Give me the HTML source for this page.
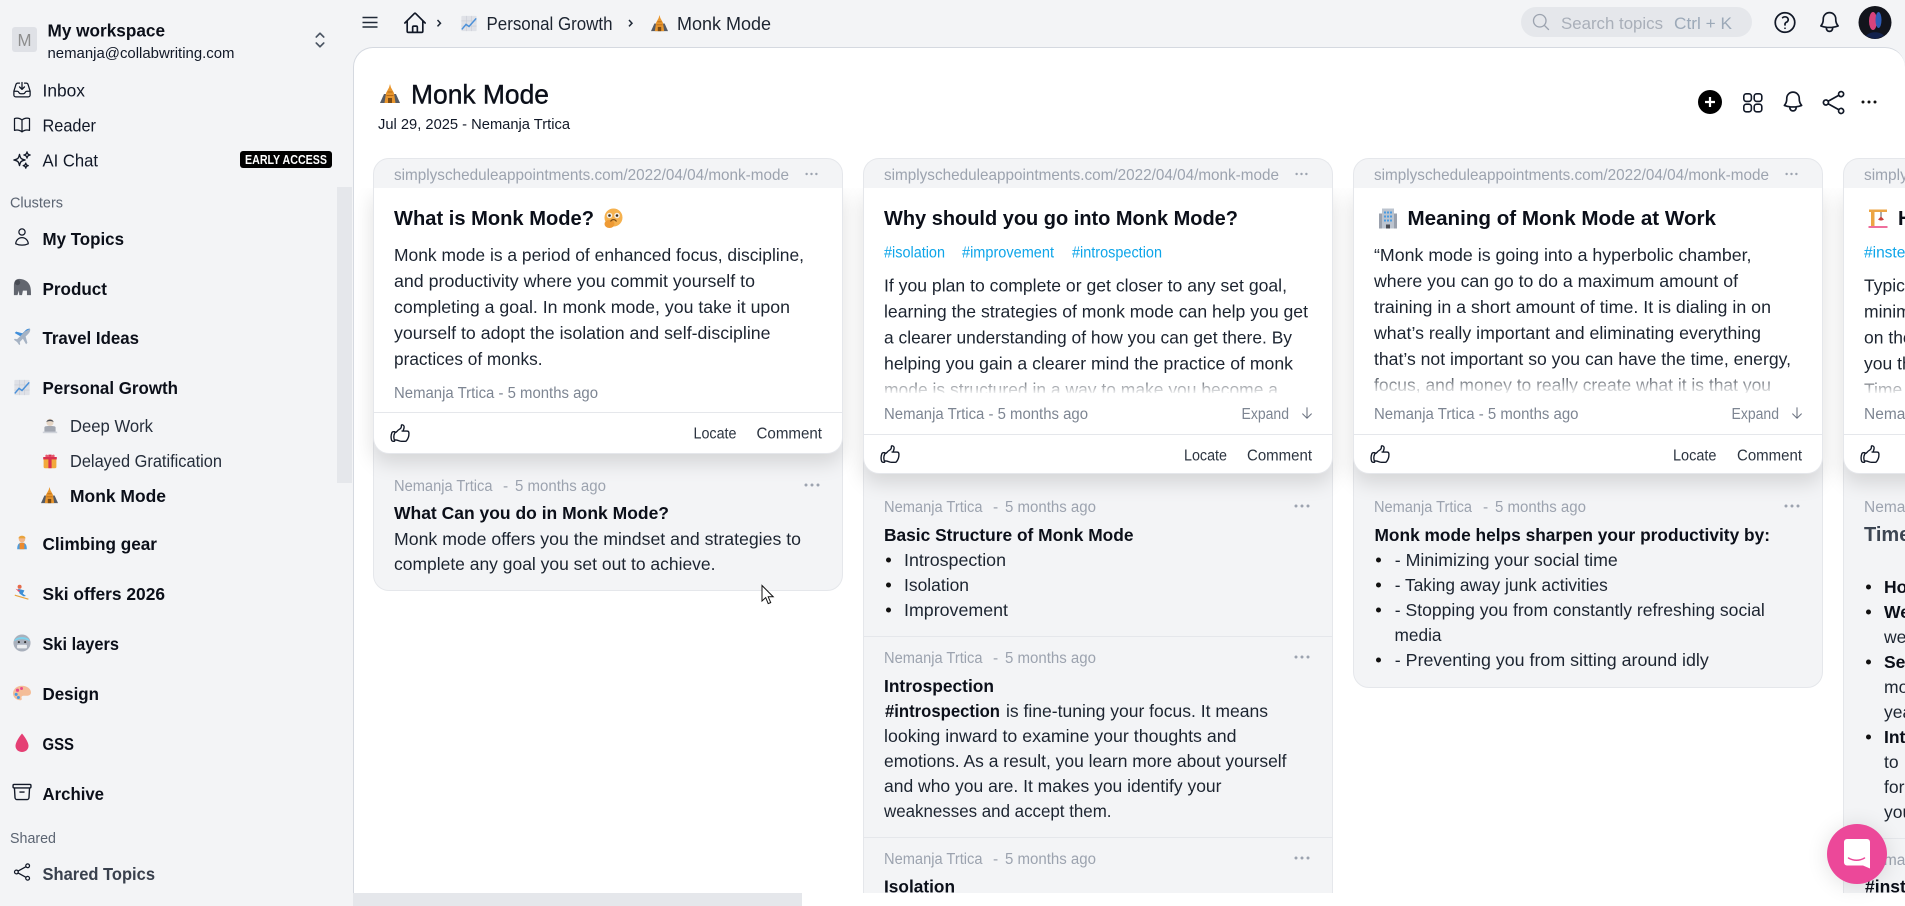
<!DOCTYPE html>
<html lang="en"><head><meta charset="utf-8"><title>Monk Mode</title>
<style>
html,body{margin:0;padding:0;width:1905px;height:906px;overflow:hidden;background:#f3f4f6;font-family:"Liberation Sans",sans-serif}
.abs{position:absolute;box-sizing:border-box}
.main{left:353px;top:47px;width:1552px;height:859px;background:#fff;border:1px solid #d5d9e0;border-right:0;border-radius:20px 20px 0 0}
.sb{left:337px;top:187px;width:15px;height:296px;background:#e5e7eb}
.col{width:470px;top:158px;background:#f3f4f6;border:1px solid #e5e7eb;border-radius:16px}
.tall{height:735px;border-bottom:0;border-radius:16px 16px 0 0}
.card{left:-1px;width:470px;top:29px;background:#fff;border:1px solid #e5e7eb;border-top:0;border-radius:0 0 16px 16px;box-shadow:0 9px 20px rgba(0,0,0,.13);clip-path:inset(0 -30px -40px -30px)}
.hr{left:0;width:468px;height:1px;background:#e5e7eb}
.strip{left:353px;top:893px;width:1552px;height:13px;background:#fff}
.thumb{left:353px;top:893px;width:449px;height:13px;background:#e5e7eb}
.chat{left:1827px;top:824px;width:60px;height:60px;border-radius:50%;background:#ec4899;box-shadow:0 2px 22px rgba(0,0,0,.12)}
svg.layer{position:absolute;left:0;top:0}
text{font-family:"Liberation Sans",sans-serif;fill:#1c2430;white-space:pre}
.s{font-size:17.5px;fill:#111827}
.sb17{font-size:17.5px;font-weight:700;fill:#0b0f19}
.g14{font-size:14.5px;fill:#5b6472}
.u{font-size:16px;fill:#9ca3af}
.h{font-size:20px;font-weight:700;fill:#0b0f19}
.p{font-size:17.5px;fill:#1c2430}
.pb{font-size:17.5px;font-weight:700;fill:#0b0f19}
.m{font-size:15.5px;fill:#7d8592}
.m2{font-size:15.5px;fill:#9ca3af}
.a{font-size:15.5px;fill:#2c3440}
.t{font-size:15.5px;fill:#0ea5e9}
</style></head><body>
<div class="abs sb"></div>
<div class="abs main"></div>

<div class="abs col" style="left:373px;height:433px"><div class="abs card" style="height:265.5px"><div class="abs hr" style="top:224px"></div></div></div>
<div class="abs col tall" style="left:863px"><div class="abs card" style="height:286px"><div class="abs hr" style="top:245.5px"></div></div>
<div class="abs hr" style="top:477px"></div><div class="abs hr" style="top:678px"></div></div>
<div class="abs col" style="left:1353px;height:530px"><div class="abs card" style="height:286px"><div class="abs hr" style="top:245.5px"></div></div></div>
<div class="abs col tall" style="left:1843px"><div class="abs card" style="height:286px"><div class="abs hr" style="top:245.5px"></div></div>
<div class="abs hr" style="top:679px"></div></div>

<div class="abs strip"></div><div class="abs thumb"></div>

<svg class="layer" width="1905" height="906" viewBox="0 0 1905 906" xmlns="http://www.w3.org/2000/svg">
<defs>
<clipPath id="c"><rect x="353" y="47" width="1552" height="846"/></clipPath>
<linearGradient id="f" x1="0" y1="0" x2="0" y2="1"><stop offset="0" stop-color="#fff" stop-opacity="0"/><stop offset="1" stop-color="#fff" stop-opacity=".92"/></linearGradient>
<symbol id="inbox" viewBox="0 0 24 24"><path fill="none" stroke="#111827" stroke-width="1.5" stroke-linecap="round" stroke-linejoin="round" d="M9 3.75H6.912a2.25 2.25 0 0 0-2.15 1.588L2.35 13.177a2.25 2.25 0 0 0-.1.661V18a2.25 2.25 0 0 0 2.25 2.25h15A2.25 2.25 0 0 0 21.75 18v-4.162c0-.224-.034-.447-.1-.661L19.24 5.338a2.25 2.25 0 0 0-2.15-1.588H15M2.25 13.5h3.86a2.25 2.25 0 0 1 2.012 1.244l.256.512a2.25 2.25 0 0 0 2.013 1.244h3.218a2.25 2.25 0 0 0 2.013-1.244l.256-.512a2.25 2.25 0 0 1 2.013-1.244h3.859M12 3v8.25m0 0-3-3m3 3 3-3"/></symbol>
<symbol id="book" viewBox="0 0 24 24"><path fill="none" stroke="#111827" stroke-width="1.5" stroke-linecap="round" stroke-linejoin="round" d="M12 6.042A8.967 8.967 0 0 0 6 3.75c-1.052 0-2.062.18-3 .512v14.25A8.987 8.987 0 0 1 6 18c2.305 0 4.408.867 6 2.292m0-14.25a8.966 8.966 0 0 1 6-2.292c1.052 0 2.062.18 3 .512v14.25A8.987 8.987 0 0 0 18 18a8.967 8.967 0 0 0-6 2.292m0-14.25v14.25"/></symbol>
<symbol id="spark" viewBox="0 0 24 24"><path fill="none" stroke="#111827" stroke-width="1.6" stroke-linecap="round" stroke-linejoin="round" d="M9.813 15.904 9 18.75l-.813-2.846a4.5 4.5 0 0 0-3.09-3.09L2.25 12l2.846-.813a4.5 4.5 0 0 0 3.09-3.09L9 5.25l.813 2.846a4.5 4.5 0 0 0 3.09 3.09L15.75 12l-2.846.813a4.5 4.5 0 0 0-3.09 3.09ZM18.259 8.715 18 9.75l-.259-1.035a3.375 3.375 0 0 0-2.455-2.456L14.25 6l1.036-.259a3.375 3.375 0 0 0 2.455-2.456L18 2.25l.259 1.035a3.375 3.375 0 0 0 2.456 2.456L21.75 6l-1.035.259a3.375 3.375 0 0 0-2.456 2.456ZM16.894 20.567 16.5 21.75l-.394-1.183a2.25 2.25 0 0 0-1.423-1.423L13.5 18.75l1.183-.394a2.25 2.25 0 0 0 1.423-1.423l.394-1.183.394 1.183a2.25 2.25 0 0 0 1.423 1.423l1.183.394-1.183.394a2.25 2.25 0 0 0-1.423 1.423Z"/></symbol>
<symbol id="user" viewBox="0 0 24 24"><path fill="none" stroke="#111827" stroke-width="1.5" stroke-linecap="round" stroke-linejoin="round" d="M15.75 6a3.75 3.75 0 1 1-7.5 0 3.75 3.75 0 0 1 7.5 0ZM4.501 20.118a7.5 7.5 0 0 1 14.998 0A17.933 17.933 0 0 1 12 21.75c-2.676 0-5.216-.584-7.499-1.632Z"/></symbol>
<symbol id="arch" viewBox="0 0 24 24"><path fill="none" stroke="#111827" stroke-width="1.5" stroke-linecap="round" stroke-linejoin="round" d="m20.25 7.5-.625 10.632a2.25 2.25 0 0 1-2.247 2.118H6.622a2.25 2.25 0 0 1-2.247-2.118L3.75 7.5m6 4.5h4.5M3.375 7.5h17.25c.621 0 1.125-.504 1.125-1.125v-1.5c0-.621-.504-1.125-1.125-1.125H3.375c-.621 0-1.125.504-1.125 1.125v1.5c0 .621.504 1.125 1.125 1.125Z"/></symbol>
<symbol id="share" viewBox="0 0 24 24"><path fill="none" stroke="#111827" stroke-width="1.5" stroke-linecap="round" stroke-linejoin="round" d="M7.217 10.907a2.25 2.25 0 1 0 0 2.186m0-2.186c.18.324.283.696.283 1.093s-.103.77-.283 1.093m0-2.186 9.566-5.314m-9.566 7.5 9.566 5.314m0 0a2.25 2.25 0 1 0 3.935 2.186 2.25 2.25 0 0 0-3.935-2.186Zm0-12.814a2.25 2.25 0 1 0 3.933-2.185 2.25 2.25 0 0 0-3.933 2.185Z"/></symbol>
<symbol id="home" viewBox="0 0 24 24"><path fill="none" stroke="#111827" stroke-width="1.6" stroke-linecap="round" stroke-linejoin="round" d="m2.25 12 8.954-8.955c.44-.439 1.152-.439 1.591 0L21.75 12M4.5 9.75v10.125c0 .621.504 1.125 1.125 1.125H9.75v-4.875c0-.621.504-1.125 1.125-1.125h2.25c.621 0 1.125.504 1.125 1.125V21h4.125c.621 0 1.125-.504 1.125-1.125V9.75M8.25 21h8.25"/></symbol>
<symbol id="bell" viewBox="0 0 24 24"><path fill="none" stroke="#111827" stroke-width="1.6" stroke-linecap="round" stroke-linejoin="round" d="M14.857 17.082a23.848 23.848 0 0 0 5.454-1.31A8.967 8.967 0 0 1 18 9.75V9A6 6 0 0 0 6 9v.75a8.967 8.967 0 0 1-2.312 6.022c1.733.64 3.56 1.085 5.455 1.31m5.714 0a24.255 24.255 0 0 1-5.714 0m5.714 0a3 3 0 1 1-5.714 0"/></symbol>
<symbol id="help" viewBox="0 0 24 24"><path fill="none" stroke="#111827" stroke-width="1.6" stroke-linecap="round" stroke-linejoin="round" d="M9.879 7.519c1.171-1.025 3.071-1.025 4.242 0 1.172 1.025 1.172 2.687 0 3.712-.203.179-.43.326-.67.442-.745.361-1.45.999-1.45 1.827v.75M21 12a9 9 0 1 1-18 0 9 9 0 0 1 18 0Zm-9 5.25h.008v.008H12v-.008Z"/></symbol>
<symbol id="thumb" viewBox="0 0 24 24"><path fill="none" stroke="#111827" stroke-width="1.5" stroke-linecap="round" stroke-linejoin="round" d="M6.633 10.25c.806 0 1.533-.446 2.031-1.08a9.041 9.041 0 0 1 2.861-2.4c.723-.384 1.35-.956 1.653-1.715a4.498 4.498 0 0 0 .322-1.672V2.75a.75.75 0 0 1 .75-.75 2.25 2.25 0 0 1 2.25 2.25c0 1.152-.26 2.243-.723 3.218-.266.558.107 1.282.725 1.282m0 0h3.126c1.026 0 1.945.694 2.054 1.715.045.422.068.85.068 1.285a11.95 11.95 0 0 1-2.649 7.521c-.388.482-.987.729-1.605.729H13.48c-.483 0-.964-.078-1.423-.23l-3.114-1.04a4.501 4.501 0 0 0-1.423-.23H5.904m10.598-9.75H14.25M5.904 18.5c.083.205.173.405.27.602.197.4-.078.898-.523.898h-.908c-.889 0-1.713-.518-1.972-1.368a12 12 0 0 1-.521-3.507c0-1.553.295-3.036.831-4.398C3.387 9.953 4.167 9.5 5 9.5h1.053c.472 0 .745.556.5.96a8.958 8.958 0 0 0-1.302 4.665c0 1.194.232 2.333.654 3.375Z"/></symbol>
<symbol id="arrow" viewBox="0 0 24 24"><path fill="none" stroke="#6b7280" stroke-width="1.8" stroke-linecap="round" stroke-linejoin="round" d="M19.5 13.5 12 21m0 0-7.5-7.5M12 21V3"/></symbol>
<symbol id="search" viewBox="0 0 24 24"><path fill="none" stroke="#9ca3af" stroke-width="1.6" stroke-linecap="round" stroke-linejoin="round" d="m21 21-5.197-5.197m0 0A7.5 7.5 0 1 0 5.196 5.196a7.5 7.5 0 0 0 10.607 10.607Z"/></symbol>
<symbol id="updown" viewBox="0 0 24 24"><path fill="none" stroke="#4b5563" stroke-width="1.6" stroke-linecap="round" stroke-linejoin="round" d="M8.25 15 12 18.75 15.75 15m-7.5-6L12 5.25 15.75 9"/></symbol>
<symbol id="dots" viewBox="0 0 16 4"><circle cx="2" cy="2" r="1.5" fill="#9ca3af"/><circle cx="8" cy="2" r="1.5" fill="#9ca3af"/><circle cx="14" cy="2" r="1.5" fill="#9ca3af"/></symbol>
<symbol id="dotsk" viewBox="0 0 16 4"><circle cx="2" cy="2" r="1.5" fill="#111"/><circle cx="8" cy="2" r="1.5" fill="#111"/><circle cx="14" cy="2" r="1.5" fill="#111"/></symbol>

<symbol id="e-chart" viewBox="0 0 20 20"><rect x="1" y="1" width="18" height="18" rx="1" fill="#dfe1e7"/><path d="M1 7h18M1 13h18M7 1v18M13 1v18" stroke="#c8ccd4" stroke-width=".7"/><path d="M1.5 17 6.5 11 10 13.5 18.5 4" fill="none" stroke="#4a90d9" stroke-width="1.7"/></symbol>
<symbol id="e-monk" viewBox="0 0 20 20"><path d="M0 19 4 10h12l4 9Z" fill="#555b66"/><path d="M10 0 11 3.5 14 9 15.5 19H4.5L6 9 9 3.5Z" fill="#e8962e"/><path d="M7.5 8h5M6.5 11.5h7" stroke="#b86a15" stroke-width="1"/><rect x="8" y="14" width="4" height="5" fill="#7a4a15"/></symbol>
<symbol id="e-gor" viewBox="0 0 20 20"><path d="M1 19V8C1 4 3 1 7 1 11 1 16 3 18 7 20 10 20 15 20 19H15.5V14L11 14 10 19H7L6.5 14 5 19Z" fill="#62666f"/><circle cx="5" cy="5" r="3" fill="#474b53"/></symbol>
<symbol id="e-plane" viewBox="0 0 20 20"><path d="M19 1C17 .5 15 1.5 13.5 3L10.5 6 3.5 4 2 5.5 8 9 4.5 12.5 2 12 1 13 4.5 15.5 7 19 8 18 7.5 15.5 11 12 14.5 18 16 16.5 14 9.5 17 6.5C18.5 5 19.5 3 19 1Z" fill="#a6b3c4"/><path d="M19 1C17 .5 15 1.5 13.5 3L10.5 6 3.5 4 2 5.5 8 9 13 4Z" fill="#3f8fdc"/></symbol>
<symbol id="e-deep" viewBox="0 0 20 20"><circle cx="10" cy="5.5" r="4.5" fill="#e6d6c5"/><path d="M5.5 5C6 1 14 1 14.5 5 12 3.5 8 3.5 5.5 5Z" fill="#4a4d55"/><path d="M3 12C3 10 6 10 10 10s7 0 7 2v6H3Z" fill="#a2a7b1"/><rect x="1" y="17" width="18" height="2" fill="#cfd3da"/></symbol>
<symbol id="e-gift" viewBox="0 0 20 20"><rect x="2" y="6" width="16" height="13" rx="1.5" fill="#f2a93b"/><rect x="8" y="2" width="4" height="17" fill="#d9304f"/><rect x="1.5" y="5" width="17" height="3" fill="#d9304f"/><path d="M10 5C7 1 3 1 4.5 5ZM10 5C13 1 17 1 15.5 5Z" fill="#e65a6f"/></symbol>
<symbol id="e-climb" viewBox="0 0 20 20"><path d="M4 19C4 13 6 11 10 11s6 2 6 8Z" fill="#4d9de0"/><path d="M7 11h6v8H7Z" fill="#ec8a2e"/><circle cx="10" cy="6.5" r="4" fill="#f2b68a"/><path d="M5.5 5.5C6 1 14 1 14.5 5.5Z" fill="#e8a33d"/></symbol>
<symbol id="e-ski" viewBox="0 0 20 20"><circle cx="7" cy="3.5" r="2.5" fill="#e56a4a"/><path d="M5 6 13 8 11 12 15 15 12 15.5 7 12Z" fill="#3c8fd6"/><path d="M2 6 8 8 6 10Z" fill="#e04f6c"/><path d="M1 14 18 19" stroke="#e8a33d" stroke-width="1.4"/></symbol>
<symbol id="e-cold" viewBox="0 0 20 20"><circle cx="10" cy="10" r="9.5" fill="#a9b0bc"/><path d="M1.5 8C2 2 18 2 18.5 8 14 5 6 5 1.5 8Z" fill="#7cd4ef"/><circle cx="6.5" cy="9" r="1.2" fill="#333"/><circle cx="13.5" cy="9" r="1.2" fill="#333"/><rect x="4.5" y="12" width="11" height="4" rx="1" fill="#eceef1"/></symbol>
<symbol id="e-pal" viewBox="0 0 20 20"><path d="M10 2C4 2 0 6 0 10.5 0 15 4 18 8 18 10 18 10 16.5 9.5 15.5 9 14 10 13 12 13H16C18.5 13 20 11.5 20 9.5 20 5 15 2 10 2Z" fill="#f4bd98"/><circle cx="5" cy="7" r="1.8" fill="#e94b8a"/><circle cx="9.5" cy="5" r="1.6" fill="#e94b8a"/><circle cx="3.5" cy="11.5" r="1.7" fill="#4a9be0"/><circle cx="6" cy="15" r="1.7" fill="#4a9be0"/></symbol>
<symbol id="e-drop" viewBox="0 0 20 20"><path d="M10 .5C10 .5 3.5 8 3.5 13 3.5 16.5 6.5 19 10 19s6.5-2.5 6.5-6C16.5 8 10 .5 10 .5Z" fill="#e53f74"/></symbol>
<symbol id="e-face" viewBox="0 0 20 20"><circle cx="10.5" cy="9" r="9" fill="#f5b14e"/><ellipse cx="6.5" cy="15.5" rx="5" ry="4" fill="#ee9a35"/><circle cx="6.5" cy="7" r="2.8" fill="#f5efe5"/><circle cx="14" cy="7" r="2.8" fill="#f5efe5"/><circle cx="6.5" cy="7" r="1.3" fill="#3a2a18"/><circle cx="14" cy="7" r="1.3" fill="#3a2a18"/><path d="M7.5 13C9 10.5 12 10.5 13.5 13" fill="none" stroke="#7a4a15" stroke-width="1.2"/></symbol>
<symbol id="e-bld" viewBox="0 0 20 20"><rect x="1" y="5" width="4" height="15" fill="#9aa1ad"/><rect x="15" y="5" width="4" height="15" fill="#9aa1ad"/><rect x="4" y="0" width="12" height="20" fill="#bcc4cf"/><path d="M6 3h2v2H6ZM9 3h2v2H9ZM12 3h2v2h-2ZM6 7h2v2H6ZM9 7h2v2H9ZM12 7h2v2h-2ZM6 11h2v2H6ZM9 11h2v2H9ZM12 11h2v2h-2Z" fill="#4a9be0"/><rect x="8" y="16" width="4" height="4" fill="#4a4d55"/></symbol>
<symbol id="e-crane" viewBox="0 0 20 20"><rect x="3" y="1" width="3.5" height="17" fill="#eca544"/><rect x="1" y="1" width="18" height="2.5" fill="#eca544"/><path d="M13 3.5v5" stroke="#555" stroke-width="1"/><path d="M10 11 13 8 16 11 14 12H12Z" fill="#c9413b"/><rect x=".5" y="17.5" width="19" height="2" fill="#ef6f9c"/></symbol>
</defs>

<!-- sidebar -->
<rect x="12" y="27" width="25" height="25" rx="3" fill="#dfe1e6"/>
<text x="17.5" y="46" font-size="17.5" style="fill:#8d8d8d" textLength="14" lengthAdjust="spacingAndGlyphs">M</text>
<text x="47.5" y="36.5" class="sb17" textLength="117.5" lengthAdjust="spacingAndGlyphs">My workspace</text>
<text x="47.5" y="58" font-size="15" style="fill:#111827" textLength="187" lengthAdjust="spacingAndGlyphs">nemanja@collabwriting.com</text>
<use href="#updown" x="308" y="28" width="24" height="24"/>

<use href="#inbox" x="12" y="80" width="20" height="20"/>
<text x="42.5" y="96.5" class="s" textLength="42.5" lengthAdjust="spacingAndGlyphs">Inbox</text>
<use href="#book" x="12" y="115" width="20" height="20"/>
<text x="42.5" y="131.5" class="s" textLength="53.5" lengthAdjust="spacingAndGlyphs">Reader</text>
<use href="#spark" x="12" y="150" width="20" height="20"/>
<text x="42.5" y="166.5" class="s" textLength="55.5" lengthAdjust="spacingAndGlyphs">AI Chat</text>
<rect x="240" y="151" width="92" height="17" rx="3" fill="#000"/>
<text x="245" y="164" font-size="12.5" font-weight="700" style="fill:#fff" textLength="82" lengthAdjust="spacingAndGlyphs">EARLY ACCESS</text>

<text x="10" y="207.5" class="g14" textLength="53" lengthAdjust="spacingAndGlyphs">Clusters</text>
<use href="#user" x="12" y="227" width="20" height="20"/>
<text x="42.5" y="245" class="sb17" textLength="81.5" lengthAdjust="spacingAndGlyphs">My Topics</text>
<use href="#e-gor" x="13" y="278" width="18" height="18"/>
<text x="42.5" y="295" class="sb17" textLength="64.5" lengthAdjust="spacingAndGlyphs">Product</text>
<use href="#e-plane" x="13" y="328" width="18" height="18"/>
<text x="42.5" y="344" class="sb17" textLength="96.5" lengthAdjust="spacingAndGlyphs">Travel Ideas</text>
<use href="#e-chart" x="13" y="379" width="18" height="17"/>
<text x="42.5" y="394" class="sb17" textLength="135.5" lengthAdjust="spacingAndGlyphs">Personal Growth</text>
<use href="#e-deep" x="42" y="417" width="16" height="18"/>
<text x="70" y="432" class="s" textLength="83" lengthAdjust="spacingAndGlyphs" style="fill:#252d3a">Deep Work</text>
<use href="#e-gift" x="42" y="452" width="16" height="18"/>
<text x="70" y="467" class="s" textLength="152" lengthAdjust="spacingAndGlyphs" style="fill:#252d3a">Delayed Gratification</text>
<use href="#e-monk" x="41" y="487" width="17" height="17"/>
<text x="70" y="502" class="sb17" textLength="96" lengthAdjust="spacingAndGlyphs">Monk Mode</text>
<use href="#e-climb" x="14" y="533" width="16" height="18"/>
<text x="42.5" y="550" class="sb17" textLength="114.5" lengthAdjust="spacingAndGlyphs">Climbing gear</text>
<use href="#e-ski" x="14" y="583" width="16" height="18"/>
<text x="42.5" y="600" class="sb17" textLength="122.5" lengthAdjust="spacingAndGlyphs">Ski offers 2026</text>
<use href="#e-cold" x="13" y="634" width="18" height="18"/>
<text x="42.5" y="650" class="sb17" textLength="76.5" lengthAdjust="spacingAndGlyphs">Ski layers</text>
<use href="#e-pal" x="13" y="684" width="18" height="18"/>
<text x="42.5" y="700" class="sb17" textLength="56.5" lengthAdjust="spacingAndGlyphs">Design</text>
<use href="#e-drop" x="12" y="733" width="20" height="20"/>
<text x="42.5" y="750" class="sb17" textLength="31.5" lengthAdjust="spacingAndGlyphs">GSS</text>
<use href="#arch" x="11" y="781" width="22" height="22"/>
<text x="42.5" y="800" class="sb17" textLength="61.5" lengthAdjust="spacingAndGlyphs">Archive</text>
<text x="10" y="843" class="g14" textLength="46" lengthAdjust="spacingAndGlyphs">Shared</text>
<use href="#share" x="12" y="862" width="20" height="20"/>
<text x="42.5" y="880" class="sb17" style="fill:#39404d" textLength="112.5" lengthAdjust="spacingAndGlyphs">Shared Topics</text>

<!-- top bar -->
<path d="M362.5 17.5h15M362.5 22.5h15M362.5 27h15" stroke="#1f2937" stroke-width="1.5" fill="none"/>
<use href="#home" x="402.5" y="10.5" width="25" height="25"/>
<path d="M437.5 20l3 3.2-3 3.2" fill="none" stroke="#1f2937" stroke-width="1.5"/>
<use href="#e-chart" x="460" y="15" width="18" height="17"/>
<text x="486.5" y="30" font-size="18" style="fill:#1c2430" textLength="126" lengthAdjust="spacingAndGlyphs">Personal Growth</text>
<path d="M629 20l3 3.2-3 3.2" fill="none" stroke="#1f2937" stroke-width="1.5"/>
<use href="#e-monk" x="651" y="15" width="17" height="17"/>
<text x="677" y="30" font-size="18" style="fill:#1c2430" textLength="94" lengthAdjust="spacingAndGlyphs">Monk Mode</text>

<rect x="1521" y="7" width="231" height="30" rx="15" fill="#e5e7eb"/>
<use href="#search" x="1531" y="12" width="20" height="20"/>
<text x="1561" y="29" font-size="17" style="fill:#a9afb9" textLength="102" lengthAdjust="spacingAndGlyphs">Search topics</text>
<text x="1674" y="29" font-size="17" style="fill:#9ca9b8" textLength="58" lengthAdjust="spacingAndGlyphs">Ctrl + K</text>
<use href="#help" x="1772" y="9.5" width="26" height="26"/>
<use href="#bell" x="1817" y="9.5" width="25" height="25"/>
<circle cx="1875" cy="22.5" r="16.5" fill="#12141c"/>
<ellipse cx="1873" cy="21" rx="4" ry="9" fill="#d8437c"/>
<ellipse cx="1878.500" cy="20" rx="3" ry="8" fill="#2f5db8"/>
<path d="M1866 36c3-5 15-5 18 0l-9 3Z" fill="#14224c"/>

<!-- page header -->
<use href="#e-monk" x="380" y="84" width="20" height="20"/>
<text x="411" y="103.5" font-size="27" style="fill:#0b0f19" stroke="#0b0f19" stroke-width=".4" textLength="138" lengthAdjust="spacingAndGlyphs">Monk Mode</text>
<text x="378" y="129" font-size="15" style="fill:#111827" textLength="192" lengthAdjust="spacingAndGlyphs">Jul 29, 2025 - Nemanja Trtica</text>
<circle cx="1710" cy="102" r="12" fill="#000"/>
<path d="M1705 102h10M1710 97v10" stroke="#fff" stroke-width="2.2"/>
<g fill="none" stroke="#111827" stroke-width="1.6"><rect x="1743.8" y="93.8" width="7.6" height="7.6" rx="2.5"/><rect x="1754.2" y="93.8" width="7.6" height="7.6" rx="2.5"/><rect x="1743.8" y="104.2" width="7.6" height="7.6" rx="2.5"/><rect x="1754.2" y="104.2" width="7.6" height="7.6" rx="2.5"/></g>
<use href="#bell" x="1780.5" y="89" width="25" height="25"/>
<use href="#share" x="1820" y="89" width="27" height="27"/>
<use href="#dotsk" x="1861" y="100" width="16" height="4"/>

<g clip-path="url(#c)">
<!-- column 1 -->
<text x="394" y="180" class="u" textLength="395" lengthAdjust="spacingAndGlyphs">simplyscheduleappointments.com/2022/04/04/monk-mode</text>
<use href="#dots" x="805" y="172" width="13" height="4"/>
<text x="394" y="225" class="h" textLength="200" lengthAdjust="spacingAndGlyphs">What is Monk Mode?</text>
<use href="#e-face" x="603" y="208" width="20" height="21"/>
<text x="394" y="261" class="p" textLength="410" lengthAdjust="spacingAndGlyphs">Monk mode is a period of enhanced focus, discipline,</text>
<text x="394" y="287" class="p" textLength="361" lengthAdjust="spacingAndGlyphs">and productivity where you commit yourself to</text>
<text x="394" y="313" class="p" textLength="396" lengthAdjust="spacingAndGlyphs">completing a goal. In monk mode, you take it upon</text>
<text x="394" y="339" class="p" textLength="376.5" lengthAdjust="spacingAndGlyphs">yourself to adopt the isolation and self-discipline</text>
<text x="394" y="365" class="p" textLength="148.5" lengthAdjust="spacingAndGlyphs">practices of monks.</text>
<text x="394" y="398" class="m" textLength="204" lengthAdjust="spacingAndGlyphs">Nemanja Trtica - 5 months ago</text>
<use href="#thumb" x="389" y="423" width="22" height="22"/>
<text x="693.5" y="438.5" class="a" textLength="43" lengthAdjust="spacingAndGlyphs">Locate</text>
<text x="756.5" y="438.5" class="a" textLength="65.5" lengthAdjust="spacingAndGlyphs">Comment</text>
<text x="394" y="491" class="m2" textLength="98.5" lengthAdjust="spacingAndGlyphs">Nemanja Trtica</text><text x="503" y="491" class="m2">-</text><text x="515" y="491" class="m2" textLength="91" lengthAdjust="spacingAndGlyphs">5 months ago</text>
<use href="#dots" x="804" y="483" width="16" height="4"/>
<text x="394" y="519" class="pb" textLength="275" lengthAdjust="spacingAndGlyphs">What Can you do in Monk Mode?</text>
<text x="394" y="545" class="p" textLength="407" lengthAdjust="spacingAndGlyphs">Monk mode offers you the mindset and strategies to</text>
<text x="394" y="570" class="p" textLength="321.5" lengthAdjust="spacingAndGlyphs">complete any goal you set out to achieve.</text>

<!-- column 2 -->
<text x="884" y="180" class="u" textLength="395" lengthAdjust="spacingAndGlyphs">simplyscheduleappointments.com/2022/04/04/monk-mode</text>
<use href="#dots" x="1295" y="172" width="13" height="4"/>
<text x="884" y="225" class="h" textLength="354" lengthAdjust="spacingAndGlyphs">Why should you go into Monk Mode?</text>
<text x="884" y="257.5" class="t" textLength="61" lengthAdjust="spacingAndGlyphs">#isolation</text>
<text x="962" y="257.5" class="t" textLength="92" lengthAdjust="spacingAndGlyphs">#improvement</text>
<text x="1072" y="257.5" class="t" textLength="90" lengthAdjust="spacingAndGlyphs">#introspection</text>
<text x="884" y="291.5" class="p" textLength="403" lengthAdjust="spacingAndGlyphs">If you plan to complete or get closer to any set goal,</text>
<text x="884" y="317.5" class="p" textLength="424" lengthAdjust="spacingAndGlyphs">learning the strategies of monk mode can help you get</text>
<text x="884" y="343.5" class="p" textLength="408" lengthAdjust="spacingAndGlyphs">a clearer understanding of how you can get there. By</text>
<text x="884" y="369.5" class="p" textLength="409" lengthAdjust="spacingAndGlyphs">helping you gain a clearer mind the practice of monk</text>
<text x="884" y="395.5" class="p" textLength="394" lengthAdjust="spacingAndGlyphs">mode is structured in a way to make you become a</text>
<rect x="866" y="374" width="465" height="19" fill="url(#f)"/><rect x="866" y="393" width="465" height="8" fill="#fff"/>
<text x="884" y="419" class="m" textLength="204" lengthAdjust="spacingAndGlyphs">Nemanja Trtica - 5 months ago</text>
<text x="1241.5" y="419" class="m" textLength="47.5" lengthAdjust="spacingAndGlyphs">Expand</text>
<use href="#arrow" x="1300" y="406" width="14" height="14"/>
<use href="#thumb" x="879" y="444" width="22" height="22"/>
<text x="1184" y="460.5" class="a" textLength="43" lengthAdjust="spacingAndGlyphs">Locate</text>
<text x="1247" y="460.5" class="a" textLength="65" lengthAdjust="spacingAndGlyphs">Comment</text>
<text x="884" y="512" class="m2" textLength="98.5" lengthAdjust="spacingAndGlyphs">Nemanja Trtica</text><text x="993" y="512" class="m2">-</text><text x="1005" y="512" class="m2" textLength="91" lengthAdjust="spacingAndGlyphs">5 months ago</text>
<use href="#dots" x="1294" y="504" width="16" height="4"/>
<text x="884" y="541" class="pb" textLength="249.5" lengthAdjust="spacingAndGlyphs">Basic Structure of Monk Mode</text>
<circle cx="888.5" cy="560" r="2.5" fill="#111"/><text x="904" y="566" class="p" textLength="102" lengthAdjust="spacingAndGlyphs">Introspection</text>
<circle cx="888.5" cy="585" r="2.5" fill="#111"/><text x="904" y="591" class="p" textLength="65" lengthAdjust="spacingAndGlyphs">Isolation</text>
<circle cx="888.5" cy="610" r="2.5" fill="#111"/><text x="904" y="616" class="p" textLength="104" lengthAdjust="spacingAndGlyphs">Improvement</text>
<text x="884" y="663" class="m2" textLength="98.5" lengthAdjust="spacingAndGlyphs">Nemanja Trtica</text><text x="993" y="663" class="m2">-</text><text x="1005" y="663" class="m2" textLength="91" lengthAdjust="spacingAndGlyphs">5 months ago</text>
<use href="#dots" x="1294" y="655" width="16" height="4"/>
<text x="884" y="692" class="pb" textLength="110" lengthAdjust="spacingAndGlyphs">Introspection</text>
<text x="885" y="717" class="pb" textLength="115" lengthAdjust="spacingAndGlyphs">#introspection</text>
<text x="1006" y="717" class="p" textLength="262" lengthAdjust="spacingAndGlyphs">is fine-tuning your focus. It means</text>
<text x="884" y="742" class="p" textLength="352.5" lengthAdjust="spacingAndGlyphs">looking inward to examine your thoughts and</text>
<text x="884" y="767" class="p" textLength="402.5" lengthAdjust="spacingAndGlyphs">emotions. As a result, you learn more about yourself</text>
<text x="884" y="792" class="p" textLength="337.5" lengthAdjust="spacingAndGlyphs">and who you are. It makes you identify your</text>
<text x="884" y="817" class="p" textLength="227.5" lengthAdjust="spacingAndGlyphs">weaknesses and accept them.</text>
<text x="884" y="864" class="m2" textLength="98.5" lengthAdjust="spacingAndGlyphs">Nemanja Trtica</text><text x="993" y="864" class="m2">-</text><text x="1005" y="864" class="m2" textLength="91" lengthAdjust="spacingAndGlyphs">5 months ago</text>
<use href="#dots" x="1294" y="856" width="16" height="4"/>
<text x="884" y="892.5" class="pb" textLength="71" lengthAdjust="spacingAndGlyphs">Isolation</text>

<!-- column 3 -->
<text x="1374" y="180" class="u" textLength="395" lengthAdjust="spacingAndGlyphs">simplyscheduleappointments.com/2022/04/04/monk-mode</text>
<use href="#dots" x="1785" y="172" width="13" height="4"/>
<use href="#e-bld" x="1378" y="208" width="20" height="21"/>
<text x="1407.5" y="225" class="h" textLength="308.5" lengthAdjust="spacingAndGlyphs">Meaning of Monk Mode at Work</text>
<text x="1374" y="261" class="p" textLength="377.5" lengthAdjust="spacingAndGlyphs">“Monk mode is going into a hyperbolic chamber,</text>
<text x="1374" y="287" class="p" textLength="364" lengthAdjust="spacingAndGlyphs">where you can go to do a maximum amount of</text>
<text x="1374" y="313" class="p" textLength="397" lengthAdjust="spacingAndGlyphs">training in a short amount of time. It is dialing in on</text>
<text x="1374" y="339" class="p" textLength="387" lengthAdjust="spacingAndGlyphs">what’s really important and eliminating everything</text>
<text x="1374" y="365" class="p" textLength="417" lengthAdjust="spacingAndGlyphs">that’s not important so you can have the time, energy,</text>
<text x="1374" y="391" class="p" textLength="397" lengthAdjust="spacingAndGlyphs">focus, and money to really create what it is that you</text>
<rect x="1356" y="372" width="465" height="21" fill="url(#f)"/><rect x="1356" y="393" width="465" height="8" fill="#fff"/>
<text x="1374" y="419" class="m" textLength="204.5" lengthAdjust="spacingAndGlyphs">Nemanja Trtica - 5 months ago</text>
<text x="1731.5" y="419" class="m" textLength="47.5" lengthAdjust="spacingAndGlyphs">Expand</text>
<use href="#arrow" x="1790" y="406" width="14" height="14"/>
<use href="#thumb" x="1369" y="444" width="22" height="22"/>
<text x="1673" y="460.5" class="a" textLength="43.5" lengthAdjust="spacingAndGlyphs">Locate</text>
<text x="1737" y="460.5" class="a" textLength="65" lengthAdjust="spacingAndGlyphs">Comment</text>
<text x="1374" y="512" class="m2" textLength="98" lengthAdjust="spacingAndGlyphs">Nemanja Trtica</text><text x="1483" y="512" class="m2">-</text><text x="1495" y="512" class="m2" textLength="91" lengthAdjust="spacingAndGlyphs">5 months ago</text>
<use href="#dots" x="1784" y="504" width="16" height="4"/>
<text x="1374.5" y="541" class="pb" textLength="395.5" lengthAdjust="spacingAndGlyphs">Monk mode helps sharpen your productivity by:</text>
<circle cx="1378.5" cy="560" r="2.5" fill="#111"/><text x="1394.8" y="566" class="p" textLength="223" lengthAdjust="spacingAndGlyphs">- Minimizing your social time</text>
<circle cx="1378.5" cy="585" r="2.5" fill="#111"/><text x="1394.8" y="591" class="p" textLength="213" lengthAdjust="spacingAndGlyphs">- Taking away junk activities</text>
<circle cx="1378.5" cy="610" r="2.5" fill="#111"/><text x="1394.8" y="616" class="p" textLength="370" lengthAdjust="spacingAndGlyphs">- Stopping you from constantly refreshing social</text>
<text x="1394.5" y="641" class="p" textLength="47" lengthAdjust="spacingAndGlyphs">media</text>
<circle cx="1378.5" cy="660" r="2.5" fill="#111"/><text x="1394.8" y="666" class="p" textLength="314" lengthAdjust="spacingAndGlyphs">- Preventing you from sitting around idly</text>

<!-- column 4 -->
<text x="1864" y="180" class="u" textLength="232" lengthAdjust="spacingAndGlyphs">simplyscheduleappointments.com</text>
<use href="#e-crane" x="1868" y="208" width="20" height="21"/>
<text x="1898" y="225" class="h">How</text>
<text x="1864" y="257.5" class="t">#insterest</text>
<text x="1864" y="291.5" class="p">Typically</text>
<text x="1864" y="317.5" class="p">minimizing</text>
<text x="1864" y="343.5" class="p">on the</text>
<text x="1864" y="369.5" class="p">you the</text>
<text x="1864" y="395.5" class="p">Time</text>
<rect x="1846" y="374" width="60" height="19" fill="url(#f)"/><rect x="1846" y="393" width="60" height="8" fill="#fff"/>
<text x="1864" y="419" class="m">Nemanja</text>
<use href="#thumb" x="1859" y="444" width="22" height="22"/>
<text x="1864" y="512" class="m2">Nemanja</text>
<text x="1864" y="541" class="h" style="fill:#3d4653">Time</text>
<circle cx="1868.5" cy="587" r="2.5" fill="#111"/><text x="1884" y="593" class="pb">How</text>
<circle cx="1868.5" cy="612" r="2.5" fill="#111"/><text x="1884" y="618" class="pb">Weekly</text>
<text x="1884" y="643" class="p">week</text>
<circle cx="1868.5" cy="662" r="2.5" fill="#111"/><text x="1884" y="668" class="pb">Seasonal</text>
<text x="1884" y="693" class="p">month</text>
<text x="1884" y="718" class="p">year</text>
<circle cx="1868.5" cy="737" r="2.5" fill="#111"/><text x="1884" y="743" class="pb">Intermittent</text>
<text x="1884" y="768" class="p">to</text>
<text x="1884" y="793" class="p">for</text>
<text x="1884" y="818" class="p">you</text>
<text x="1864" y="865" class="m2">Nemanja</text>
<text x="1865" y="892.5" class="pb">#inst</text>
</g>

<!-- cursor -->
<path d="M762 585.5v15.500l3.700-3.400 2.500 6 2.500-1-2.500-5.800h5Z" fill="#fff" stroke="#111" stroke-width="1"/>
</svg>

<div class="abs chat"></div>
<svg class="layer" width="1905" height="906" viewBox="0 0 1905 906" xmlns="http://www.w3.org/2000/svg">
<path d="M1847 839h20a3 3 0 0 1 3 3v26.500l-7-3h-16a3 3 0 0 1-3-3v-20.500a3 3 0 0 1 3-3Z" fill="#fff"/>
<path d="M1848.500 858c5 3 11 3 16 0" fill="none" stroke="#ec4899" stroke-width="1.500" stroke-linecap="round"/>
</svg>
</body></html>
